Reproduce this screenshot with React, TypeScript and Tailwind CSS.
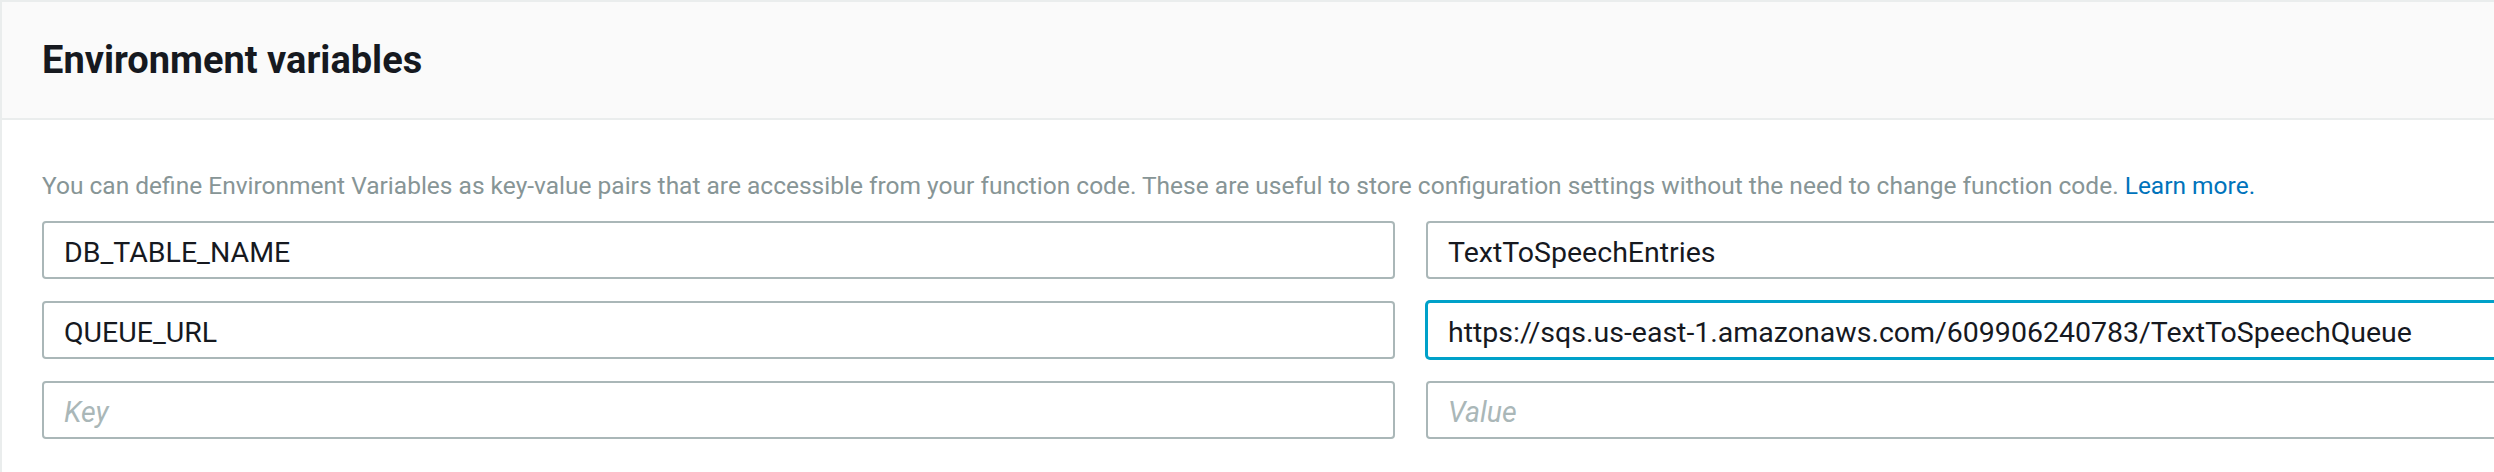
import React from 'react';

const rows = [
  { key: 'DB_TABLE_NAME', value: 'TextToSpeechEntries', focused: false },
  { key: 'QUEUE_URL', value: 'https://sqs.us-east-1.amazonaws.com/609906240783/TextToSpeechQueue', focused: true },
  { key: '', value: '', focused: false },
];

function Field({ value, placeholder, focused }: { value: string; placeholder: string; focused?: boolean }) {
  return (
    <input
      readOnly
      defaultValue={value}
      placeholder={placeholder}
      className={
        'w-[1353px] h-[58px] shrink-0 rounded-[4px] border-2 bg-white pl-[20px] pt-[4px] text-[28.5px] text-[#16191f] outline-none placeholder:italic placeholder:text-[#aab7b8] ' +
        (focused ? 'border-[#00a1c9] shadow-[0_0_0_1px_#00a1c9]' : 'border-[#aab7b8]')
      }
      style={{ fontFamily: 'Roboto, "Liberation Sans", sans-serif' }}
    />
  );
}

export default function App() {
  return (
    <div
      className="w-[2494px] h-[472px] overflow-hidden bg-white"
      style={{ fontFamily: 'Roboto, "Liberation Sans", sans-serif' }}
    >
      <div className="h-full border-t-2 border-l-2 border-[#eaeded]">
        {/* header */}
        <div className="h-[118px] flex items-center bg-[#fafafa] border-b-2 border-[#eaeded] pl-[40px]">
          <h2 className="text-[38px] font-bold text-[#16191f] leading-none">Environment variables</h2>
        </div>

        {/* body */}
        <div className="pl-[40px] pt-[48px]">
          <p className="text-[24.5px] leading-[36px] text-[#879596] whitespace-nowrap">
            You can define Environment Variables as key-value pairs that are accessible from your function code. These are useful to store configuration settings without the need to change function code.{' '}
            <a className="text-[#0073bb]">Learn more.</a>
          </p>

          <div className="mt-[17px] flex flex-col gap-[22px]">
            {rows.map((r, i) => (
              <div key={i} className="flex gap-[31px]">
                <Field value={r.key} placeholder="Key" />
                <Field value={r.value} placeholder="Value" focused={r.focused} />
              </div>
            ))}
          </div>
        </div>
      </div>
    </div>
  );
}
